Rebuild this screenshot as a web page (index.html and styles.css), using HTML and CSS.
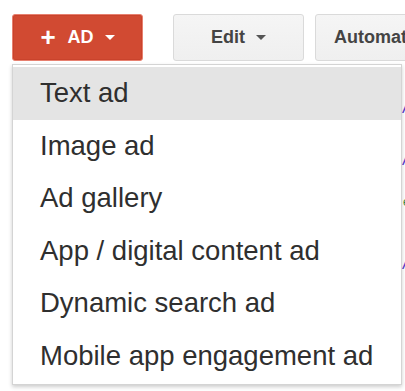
FILE: index.html
```html
<!DOCTYPE html>
<html lang="en">

<head>
  <meta charset="UTF-8">
  <title>Ads toolbar</title>
  <link rel="stylesheet" href="styles.css">
</head>

<body>
  <div class="toolbar">
    <button class="btn btn-red"><span class="plus">+</span> AD <span class="caret"></span></button>
    <div class="sep"></div>
    <button class="btn btn-gray">Edit <span class="caret caret-dark"></span></button>
    <button class="btn btn-gray btn-auto">Automate</button>
  </div>

  <div class="table">
    <div class="row"><span class="cell-link">Ad</span></div>
    <div class="row"><span class="cell-link">Ad</span></div>
    <div class="row"><span class="cell-small">e</span></div>
    <div class="row"><span class="cell-link">Ad</span></div>
    <div class="row row-last">
      <span class="col col-a"></span>
      <span class="col col-b"></span>
      <span class="col-text">Clear ad Not Scotland</span>
    </div>
  </div>

  <ul class="menu">
    <li class="active">Text ad</li>
    <li>Image ad</li>
    <li>Ad gallery</li>
    <li>App / digital content ad</li>
    <li>Dynamic search ad</li>
    <li>Mobile app engagement ad</li>
  </ul>
</body>

</html>
```

FILE: styles.css
```css
body {
  margin: 0;
  background: #fff;
  font-family: "Liberation Sans", Arial, sans-serif;
  overflow: hidden;
}

.toolbar {
  display: flex;
  align-items: center;
  padding: 14px 0 0 12px;
  height: 47px;
}

.btn {
  height: 47px;
  border-radius: 3px;
  font-family: "Liberation Sans", Arial, sans-serif;
  font-size: 18px;
  font-weight: bold;
  display: flex;
  align-items: center;
  justify-content: center;
  padding: 0;
  flex-shrink: 0;
}

.btn-red {
  width: 131px;
  background: #d14a32;
  border: 1px solid #e7806f;
  color: #fff;
  box-shadow: inset 0 0 0 1px #c9432c;
}

.plus {
  font-size: 26px;
  margin-right: 12px;
  line-height: 1;
  position: relative;
  top: -1px;
}

.caret {
  display: inline-block;
  width: 0;
  height: 0;
  border-left: 5px solid transparent;
  border-right: 5px solid transparent;
  border-top: 5px solid #fff;
  margin-left: 11px;
}

.caret-dark {
  border-top-color: #555;
}

.sep {
  width: 1px;
  height: 47px;
  background: #e8e8e8;
  margin: 0 15px;
}

.btn-gray {
  width: 131px;
  background: linear-gradient(#f5f5f5, #efefef);
  border: 1px solid #dadada;
  color: #444;
}

.btn-auto {
  margin-left: 11px;
  justify-content: flex-start;
  padding-left: 18px;
  width: 140px;
}

.table {
  margin-top: 10px;
}

.row {
  height: 52px;
  position: relative;
}

.cell-link {
  position: absolute;
  left: 402px;
  top: 28px;
  color: #5b3fcf;
  font-size: 15px;
}

.cell-small {
  position: absolute;
  left: 403px;
  top: 20px;
  color: #3a8a3a;
  font-size: 12px;
}

.col {
  position: absolute;
  top: 104px;
  width: 1px;
  height: 20px;
  background: #ddd;
}

.col-a {
  left: 90px;
}

.col-b {
  left: 175px;
}

.col-text {
  position: absolute;
  left: 195px;
  top: 101px;
  font-size: 22px;
  color: #333;
}

.menu {
  position: absolute;
  top: 64px;
  left: 12px;
  width: 388px;
  margin: 0;
  padding: 2px 0;
  list-style: none;
  background: #fff;
  border: 1px solid #d4d4d4;
  box-shadow: 0 2px 4px rgba(0, 0, 0, 0.2);
}

.menu li {
  height: 52.5px;
  line-height: 52.5px;
  padding-left: 27px;
  font-size: 27.5px;
  color: #2f2f2f;
}

.menu li.active {
  background: #e4e4e4;
}
```
